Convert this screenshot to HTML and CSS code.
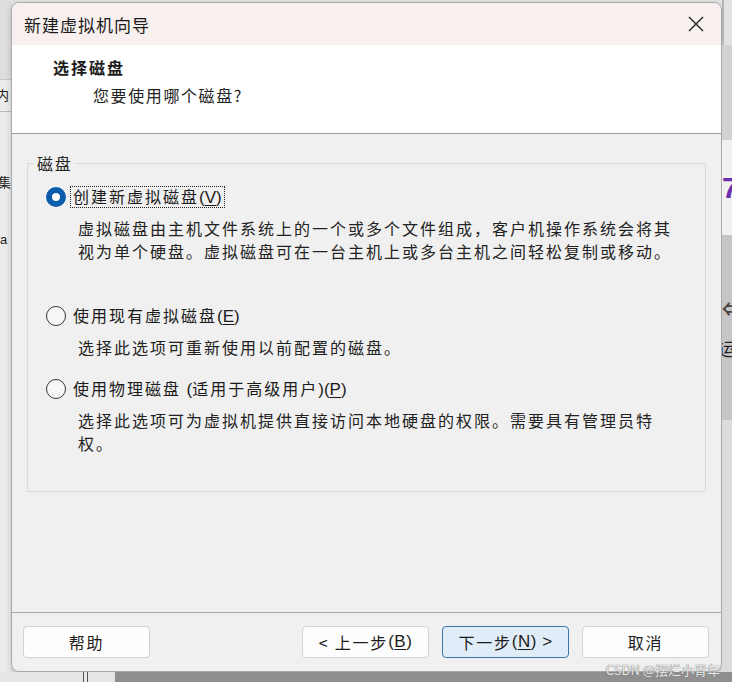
FILE: index.html
```html
<!DOCTYPE html>
<html lang="zh-CN">
<head>
<meta charset="utf-8">
<title>新建虚拟机向导</title>
<link rel="stylesheet" href="styles.css">
</head>
<body>
<div class="desk">
  <div class="left-strip">
    <div class="ls-a"></div>
    <div class="ls-b">内</div>
    <div class="ls-c"></div>
    <div class="ls-d">集</div>
    <div class="ls-e">a</div>
  </div>
  <div class="dialog">
    <div class="titlebar">
      <span class="title">新建虚拟机向导</span>
      <svg class="close" width="16" height="16" viewBox="0 0 16 16"><path d="M1 1 L15 15 M15 1 L1 15" stroke="#1c1c1c" stroke-width="1.3" fill="none"/></svg>
    </div>
    <div class="header">
      <div class="h1">选择磁盘</div>
      <div class="h2">您要使用哪个磁盘?</div>
    </div>
    <div class="content">
      <fieldset class="group">
        <legend>磁盘</legend>
        <div class="option">
          <div class="row"><span class="radio checked"></span><span class="label focus">创建新虚拟磁盘<span class="lat">(<u>V</u>)</span></span></div>
          <div class="desc">虚拟磁盘由主机文件系统上的一个或多个文件组成，客户机操作系统会将其<br>视为单个硬盘。虚拟磁盘可在一台主机上或多台主机之间轻松复制或移动。</div>
        </div>
        <div class="option opt2">
          <div class="row"><span class="radio"></span><span class="label">使用现有虚拟磁盘<span class="lat">(<u>E</u>)</span></span></div>
          <div class="desc">选择此选项可重新使用以前配置的磁盘。</div>
        </div>
        <div class="option opt3">
          <div class="row"><span class="radio"></span><span class="label">使用物理磁盘 <span class="lat">(</span>适用于高级用户<span class="lat">)(<u>P</u>)</span></span></div>
          <div class="desc">选择此选项可为虚拟机提供直接访问本地硬盘的权限。需要具有管理员特<br>权。</div>
        </div>
      </fieldset>
    </div>
    <div class="footer">
      <button class="btn">帮助</button>
      <div class="spacer"></div>
      <button class="btn">&lt; 上一步<span class="lat">(<u>B</u>)</span></button>
      <button class="btn primary">下一步<span class="lat">(<u>N</u>) &gt;</span></button>
      <button class="btn">取消</button>
    </div>
  </div>
  <div class="right-strip">
    <div class="rs-a"></div>
    <div class="rs-b"></div>
    <div class="rs-c">7</div>
    <div class="rs-d"><span class="arrow">⇐</span><span class="yun">运</span></div>
    <div class="rs-e"></div>
  </div>
</div>
<div class="bottom-strip"><div class="bs-left"><span class="bs-bar"></span></div><div class="bs-right"></div></div>
<div class="watermark">CSDN @摆烂小青年</div>
</body>
</html>
```
FILE: styles.css
```css
* { box-sizing: border-box; }
html, body { margin: 0; padding: 0; }
body {
  width: 732px;
  height: 682px;
  overflow: hidden;
  background: #e4e4e4;
  font-family: "Noto Sans CJK SC", "Noto Sans", sans-serif;
  color: #1b1b1b;
  position: relative;
}
.desk {
  display: flex;
  height: 672px;
}
.left-strip {
  width: 11px;
  flex: none;
  display: flex;
  flex-direction: column;
  background: #ececec;
  overflow: hidden;
  font-size: 16px;
  color: #222;
}
.ls-a { height: 80px; background: #dedede; border-bottom: 1px solid #c8c8c8; }
.ls-b { height: 32px; line-height: 30px; border-bottom: 1px solid #bbb; margin-left: -4px; white-space: nowrap; font-size: 13px; }
.ls-c { height: 60px; }
.ls-d { height: 58px; line-height: 20px; white-space: nowrap; font-size: 13px; margin-left: -2px; }
.ls-e { height: 40px; line-height: 20px; font-family: "Liberation Sans", sans-serif; white-space: nowrap; font-size: 13px; }

.dialog {
  width: 711px;
  flex: none;
  margin-top: 2px;
  height: 670px;
  display: flex;
  flex-direction: column;
  background: #f0f0f0;
  border: 1px solid #a9a9a9;
  border-radius: 8px;
  overflow: hidden;
  box-shadow: 0 2px 6px rgba(0,0,0,0.18);
}
.titlebar {
  height: 42px;
  flex: none;
  background: #f8f0ee;
  display: flex;
  align-items: center;
  justify-content: space-between;
  padding-left: 12px;
  padding-right: 17px;
}
.title {
  font-size: 17px;
  letter-spacing: 1px;
  color: #1a1a1a;
}
.close { display: block; }

.header {
  height: 89px;
  flex: none;
  background: #fff;
  border-bottom: 1px solid #a0a0a0;
  padding-top: 11px;
  padding-left: 41px;
}
.h1 {
  font-size: 16px;
  font-weight: 700;
  letter-spacing: 2px;
  line-height: 22px;
}
.h2 {
  margin-top: 6px;
  margin-left: 40px;
  font-size: 16px;
  letter-spacing: 1.6px;
  line-height: 22px;
  color: #222;
}

.content {
  flex: 1;
  padding: 19px 15px 0 15px;
}
.group {
  margin: 0;
  border: 1px solid #dadada;
  padding: 12px 0 36px 0;
  min-width: 0;
}
.group legend {
  margin-left: 6px;
  padding: 0 3px;
  font-size: 16px;
  line-height: 20px;
  letter-spacing: 1.8px;
  color: #222;
}
.option.opt2 { margin-top: 41px; }
.option.opt3 { margin-top: 18px; }
.row {
  display: flex;
  align-items: center;
  height: 24px;
  padding-left: 18px;
}
.radio {
  width: 20px;
  height: 20px;
  border-radius: 50%;
  border: 1px solid #333;
  background: #f7f7f7;
  flex: none;
}
.radio.checked {
  border: 6px solid #0b5cad;
  background: #fff;
}
.label {
  margin-left: 4px;
  padding: 0 2px;
  border: 1px dotted transparent;
  font-size: 16px;
  letter-spacing: 2px;
  line-height: 19px;
  white-space: nowrap;
}
.label.focus { border-color: #222; }
.lat {
  font-family: "Liberation Sans", sans-serif;
  letter-spacing: 0;
  font-size: 17px;
}
.lat u { text-underline-offset: 2px; }
.desc {
  margin-top: 8px;
  margin-left: 50px;
  font-size: 16px;
  letter-spacing: 2px;
  line-height: 23px;
  color: #222;
  white-space: nowrap;
}

.footer {
  height: 59px;
  flex: none;
  border-top: 1px solid #a6a6a6;
  display: flex;
  align-items: flex-start;
  gap: 13px;
  padding: 13px 12px 0 11px;
}
.spacer { flex: 1; }
.footer .spacer + .btn { margin-left: -13px; }
.btn {
  width: 127px;
  height: 32px;
  flex: none;
  border: 1px solid #d2d2d2;
  border-radius: 4px;
  background: #fdfdfd;
  font-family: "Noto Sans CJK SC", sans-serif;
  font-size: 16px;
  letter-spacing: 1.8px;
  color: #1b1b1b;
  padding: 0;
  display: flex;
  align-items: center;
  justify-content: center;
}
.btn .lat { font-size: 17px; letter-spacing: 0.5px; }
.btn.primary {
  background: #e0edf8;
  border-color: #3b73ab;
}

.right-strip {
  flex: 1;
  display: flex;
  flex-direction: column;
  overflow: hidden;
  background: #c9c9c9;
}
.rs-a { height: 45px; background: #e2e2e2; border-left: 2px solid #b5b5b5; }
.rs-b { height: 95px; background: #d2d2d2; }
.rs-c {
  height: 95px;
  background: #f1f1f1;
  color: #6a2fb0;
  font-family: "Liberation Sans", sans-serif;
  font-weight: 700;
  font-size: 30px;
  line-height: 95px;
}
.rs-d {
  height: 185px;
  background: #c6c6c6;
  display: flex;
  flex-direction: column;
  padding-top: 60px;
  font-size: 18px;
}
.arrow { color: #444; font-weight: 700; height: 40px; }
.yun { color: #222; margin-left: -4px; }
.rs-e { flex: 1; background: #dcdcdc; }

.bottom-strip {
  height: 10px;
  display: flex;
}
.bs-left { width: 115px; background: #e6e6e6; position: relative; }
.bs-bar { display: block; margin-left: 83px; width: 5px; height: 10px; border-left: 1px solid #555; border-right: 1px solid #555; }
.bs-right { flex: 1; background: #8f8f8f; }

.watermark {
  position: absolute;
  right: 12px;
  bottom: 4px;
  font-size: 13px;
  line-height: 16px;
  color: rgba(255,255,255,0.85);
  text-shadow: 0 0 1px #777, 0 0 1px #777;
  font-family: "Noto Sans CJK SC", sans-serif;
}
```
